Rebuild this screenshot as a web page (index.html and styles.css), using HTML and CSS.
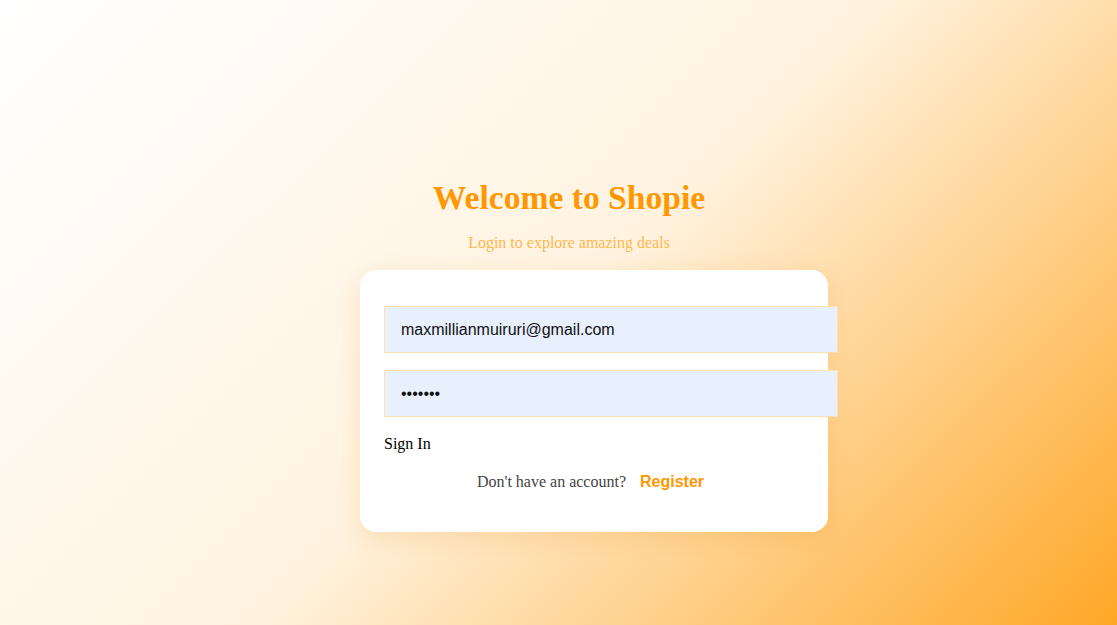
FILE: index.html
```html
<!DOCTYPE html>
<html lang="en">
<head>
<meta charset="utf-8">
<title>Shopie - Login</title>
<link rel="stylesheet" href="styles.css">
</head>
<body>
<main class="page">
  <div class="column">
    <header class="intro">
      <h1 class="title">Welcome to Shopie</h1>
      <p class="subtitle">Login to explore amazing deals</p>
    </header>
    <form class="card">
      <input class="field" type="email" value="maxmillianmuiruri@gmail.com">
      <input class="field" type="password" value="1234567">
      <button class="signin" type="button">Sign In</button>
      <p class="register-row">Don't have an account? <a class="register" href="#">Register</a></p>
    </form>
  </div>
</main>
</body>
</html>
```

FILE: styles.css
```css
html, body {
  margin: 0;
  padding: 0;
  height: 100%;
}
body {
  font-family: "Liberation Serif", "Times New Roman", serif;
  background: linear-gradient(135deg, #ffffff 0%, #fff3e0 50%, #ffa726 100%);
}
.page {
  min-height: 100%;
  display: flex;
  justify-content: center;
  align-items: flex-start;
}
.column {
  width: 468px;
  margin-left: 71px;
  margin-top: 174px;
  display: flex;
  flex-direction: column;
}
.intro {
  padding-right: 50px;
  text-align: center;
}
.title {
  margin: 0;
  font-size: 33.6px;
  font-weight: bold;
  line-height: 48px;
  color: #ff9800;
}
.subtitle {
  margin: 10px 0 0;
  font-size: 16px;
  line-height: 22px;
  color: #ffb74d;
}
.card {
  margin-top: 16px;
  background: #ffffff;
  border-radius: 16px;
  padding: 36px 24px 40px;
  box-shadow: 0 6px 24px rgba(230, 140, 20, 0.18);
  display: flex;
  flex-direction: column;
}
.field {
  width: 100%;
  height: 45px;
  margin: 0 0 17px;
  padding: 0 16px;
  border: 1px solid #ffe0b2;
  background: #e8f0fe;
  font-family: "Liberation Sans", Arial, sans-serif;
  font-size: 16px;
  color: #111;
  outline: none;
  box-sizing: content-box;
}
.signin {
  align-self: flex-start;
  background: none;
  border: none;
  padding: 0;
  font-family: "Liberation Serif", "Times New Roman", serif;
  font-size: 16px;
  line-height: 20px;
  color: #000;
  cursor: pointer;
}
.register-row {
  margin: 18px 0 0;
  text-align: center;
  font-size: 16px;
  line-height: 20px;
  color: #444;
  padding-right: 7px;
}
.register {
  margin-left: 10px;
  font-family: "Liberation Sans", Arial, sans-serif;
  font-weight: bold;
  color: #ff9800;
  text-decoration: none;
}
```
